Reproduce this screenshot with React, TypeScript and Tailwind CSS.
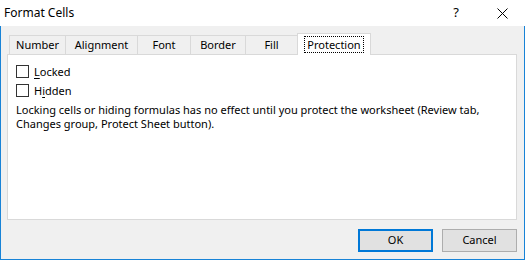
const tabs = [
  { label: "Number", w: "w-[56px]" },
  { label: "Alignment", w: "w-[72px]" },
  { label: "Font", w: "w-[53px]" },
  { label: "Border", w: "w-[55px]" },
  { label: "Fill", w: "w-[52px]" },
];

function CheckRow({ pre, key1, post }: { pre: string; key1: string; post: string }) {
  return (
    <div className="flex items-center h-[13px] gap-[5px]">
      <span className="w-[13px] h-[13px] border border-[#333333] bg-white" />
      <span className="leading-[13px]">
        {pre}
        <span className="underline underline-offset-2">{key1}</span>
        {post}
      </span>
    </div>
  );
}

const App = () => {
  return (
    <div
      className="w-[525px] h-[260px] flex flex-col text-[11px] text-black select-none"
      style={{ fontFamily: '"Noto Sans", "Liberation Sans", sans-serif' }}
    >
      {/* Title bar */}
      <div className="h-[26px] bg-white flex items-center">
        <span className="pl-[4px] flex-1 text-[12px]">Format Cells</span>
        <span className="w-[46px] text-center text-[13px]">?</span>
        <span className="w-[46px] h-[26px] flex items-center justify-center">
          <svg width="11" height="11" viewBox="0 0 11 11">
            <path d="M0.5 0.5 L10.5 10.5 M10.5 0.5 L0.5 10.5" stroke="#000" strokeWidth="1" />
          </svg>
        </span>
      </div>

      {/* Body */}
      <div className="flex-1 flex flex-col bg-[#f0f0f0] border-x border-b border-[#1883d7] pt-[7px] pl-[6px] pr-[7px]">
        <div className="h-[21px] flex items-end pl-[2px]">
          {tabs.map((t) => (
            <div
              key={t.label}
              className={`${t.w} h-[19px] border-l border-t border-[#d9d9d9] flex items-center justify-center bg-[#f0f0f0]`}
            >
              {t.label}
            </div>
          ))}
          <div className="w-[74px] h-[22px] -mb-px relative z-10 border-x border-t border-[#d9d9d9] bg-white flex items-center justify-center">
            <span className="px-[2px] leading-[15px] outline-1 outline-dotted outline-black">Protection</span>
          </div>
        </div>

        <div className="h-[166px] border border-[#d9d9d9] bg-white pt-[10px] px-[8px] flex flex-col">
          <CheckRow pre="" key1="L" post="ocked" />
          <div className="h-[6px]" />
          <CheckRow pre="H" key1="i" post="dden" />
          <p className="mt-[6px] leading-[14px]">
            Locking cells or hiding formulas has no effect until you protect the worksheet (Review tab,
            <br />
            Changes group, Protect Sheet button).
          </p>
        </div>

        <div className="flex justify-end gap-[9px] mt-[9px]">
          <button className="w-[75px] h-[23px] border-2 border-[#0078d7] bg-[#e1e1e1]">OK</button>
          <button className="w-[75px] h-[23px] border border-[#adadad] bg-[#e1e1e1]">Cancel</button>
        </div>
      </div>
    </div>
  );
};

export default App;
